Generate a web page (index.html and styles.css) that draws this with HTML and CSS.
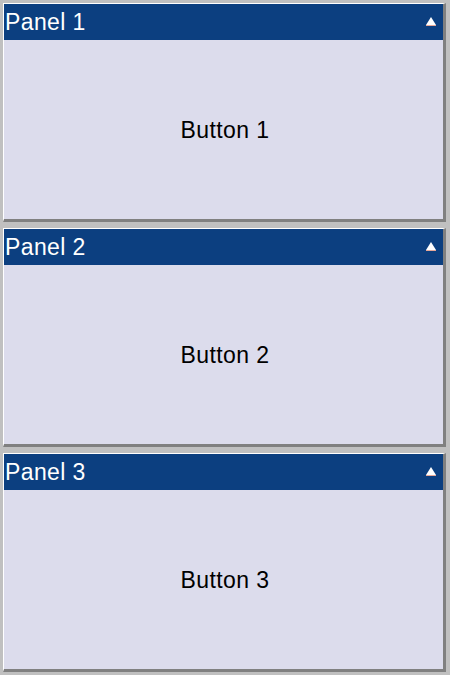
FILE: index.html
```html
<!DOCTYPE html>
<html>
<head>
<meta charset="utf-8">
<link rel="stylesheet" href="styles.css">
</head>
<body>
<div class="stack">
  <section class="panel">
    <div class="frame">
      <div class="header"><span class="title">Panel 1</span><svg class="arrow" width="10" height="9" viewBox="0 0 10 9"><polygon points="5,0 10,8 0,8" fill="#fff"/><rect x="0" y="8" width="10" height="1" fill="#e8a898"/></svg></div>
      <button class="body-btn">Button 1</button>
    </div>
  </section>
  <section class="panel">
    <div class="frame">
      <div class="header"><span class="title">Panel 2</span><svg class="arrow" width="10" height="9" viewBox="0 0 10 9"><polygon points="5,0 10,8 0,8" fill="#fff"/><rect x="0" y="8" width="10" height="1" fill="#e8a898"/></svg></div>
      <button class="body-btn">Button 2</button>
    </div>
  </section>
  <section class="panel">
    <div class="frame">
      <div class="header"><span class="title">Panel 3</span><svg class="arrow" width="10" height="9" viewBox="0 0 10 9"><polygon points="5,0 10,8 0,8" fill="#fff"/><rect x="0" y="8" width="10" height="1" fill="#e8a898"/></svg></div>
      <button class="body-btn">Button 3</button>
    </div>
  </section>
</div>
</body>
</html>
```
FILE: styles.css
```css
html, body {
  margin: 0;
  padding: 0;
  background: #c0c0c0;
}
.stack {
  width: 450px;
  display: flex;
  flex-direction: column;
}
.panel {
  height: 225px;
  box-sizing: border-box;
  padding: 3px 4px 3px 3px;
  background: #c0c0c0;
}
.frame {
  height: 100%;
  box-sizing: border-box;
  border-top: 1px solid #ffffff;
  border-left: 1px solid #ffffff;
  border-right: 3px solid #808080;
  border-bottom: 3px solid #808080;
  display: flex;
  flex-direction: column;
  background: #dcdcec;
}
.header {
  height: 36px;
  flex: none;
  background: #0c3f80;
  display: flex;
  align-items: center;
  justify-content: space-between;
  padding: 0 7px 0 1px;
  color: #ffffff;
  font-family: "Liberation Sans", Arial, sans-serif;
  font-size: 23px;
  letter-spacing: 0.4px;
}
.title {
  line-height: 1;
}
.arrow {
  display: block;
  margin-top: -2px;
}
.body-btn {
  flex: 1;
  border: none;
  margin: 0;
  padding: 2px 0 0 3px;
  background: #dcdcec;
  color: #000000;
  font-family: "Liberation Sans", Arial, sans-serif;
  font-size: 23px;
  letter-spacing: 0.4px;
}
```
